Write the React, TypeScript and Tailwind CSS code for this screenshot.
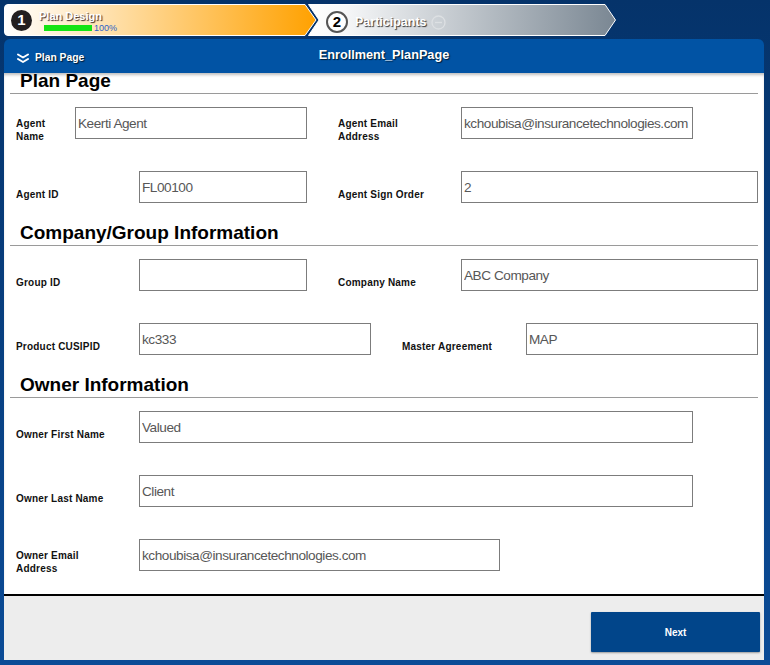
type FieldProps = {
  label: string[]
  value?: string
  labelW: string
  inputW: string
  className?: string
}

function Field({ label, value = '', labelW, inputW, className = '' }: FieldProps) {
  const twoLine = label.length > 1
  return (
    <div className={`flex items-end ${className}`}>
      <div
        className={`${labelW} shrink-0 text-[10px] leading-[13px] font-bold tracking-[0.2px] text-[#111] ${
          twoLine ? '-mb-[4px]' : 'mb-[2px]'
        }`}
      >
        {label.map((l) => (
          <div key={l}>{l}</div>
        ))}
      </div>
      <input
        readOnly
        defaultValue={value}
        className={`${inputW} h-[32px] shrink-0 border border-[#7c7c7c] bg-white px-[2px] text-[13.6px] tracking-[-0.45px] text-[#575757] outline-none`}
      />
    </div>
  )
}

function SectionTitle({ title, className = '' }: { title: string; className?: string }) {
  return (
    <div className={className}>
      <h2 className="h-[22px] pl-[16px] text-[19px] leading-[22px] font-bold text-black">{title}</h2>
      <div className="mx-[6px] mt-[1px] h-px bg-[#9a9a9a]" />
    </div>
  )
}

export default function App() {
  return (
    <div
      className="h-[665px] w-[770px] overflow-hidden bg-linear-to-b from-[#05336a] to-[#0b4b96] text-white"
      style={{ fontFamily: '"Liberation Sans", Arial, sans-serif' }}
    >
      {/* wizard steps */}
      <div className="flex h-[39px] pt-[4px] pl-[4px]">
        <div className="relative h-[32px] w-[314px]">
          <svg className="absolute inset-0" width="314" height="32" viewBox="0 0 314 32">
            <defs>
              <linearGradient id="s1" x1="0" x2="1" y1="0" y2="0">
                <stop offset="0" stopColor="#ffffff" />
                <stop offset="0.15" stopColor="#fff2dc" />
                <stop offset="1" stopColor="#ffa100" />
              </linearGradient>
            </defs>
            <path
              d="M4 0.5 H301 L312 16 L301 31.5 H4 Q0.5 31.5 0.5 28 V4 Q0.5 0.5 4 0.5 Z"
              fill="url(#s1)"
              stroke="#ffffff"
              strokeWidth="1"
            />
          </svg>
          <div className="relative flex h-full items-center pl-[7px]">
            <div className="flex h-[21px] w-[21px] items-center justify-center rounded-full bg-[#231f20] text-[15px] font-bold text-white">
              1
            </div>
            <div className="ml-[7px] mt-[1px]">
              <div className="text-[11px] leading-[13px] font-bold text-white [text-shadow:1px_1px_1px_rgba(40,20,20,0.9)]">
                Plan Design
              </div>
              <div className="mt-[1px] flex items-center pl-[5px]">
                <div className="h-[6px] w-[48px] bg-[#14e414]" />
                <span className="ml-[2px] text-[9px] leading-[8px] text-[#2c5fc6]">100%</span>
              </div>
            </div>
          </div>
        </div>

        <div className="relative -ml-[10px] h-[32px] w-[308px]">
          <svg className="absolute inset-0" width="308" height="32" viewBox="0 0 308 32">
            <defs>
              <linearGradient id="s2" x1="0" x2="1" y1="0" y2="0">
                <stop offset="0" stopColor="#ffffff" />
                <stop offset="0.12" stopColor="#f6f7f8" />
                <stop offset="1" stopColor="#7a8793" />
              </linearGradient>
            </defs>
            <path
              d="M0.5 0.5 H297 L307.5 16 L297 31.5 H0.5 L11 16 Z"
              fill="url(#s2)"
              stroke="#ffffff"
              strokeWidth="1"
            />
          </svg>
          <div className="relative flex h-full items-center pl-[18px] pt-[4px]">
            <div className="flex h-[22px] w-[22px] items-center justify-center rounded-full border-2 border-[#555] bg-white text-[15px] font-bold text-black">
              2
            </div>
            <span className="ml-[7px] text-[12.5px] font-bold text-white [text-shadow:1px_1px_1px_#333]">
              Participants
            </span>
            <svg className="ml-[4px]" width="15" height="15" viewBox="0 0 15 15">
              <circle cx="7.5" cy="7.5" r="6.5" fill="none" stroke="#dde0e3" strokeWidth="1.3" />
              <line x1="4" y1="7.5" x2="11" y2="7.5" stroke="#dde0e3" strokeWidth="1.3" />
            </svg>
          </div>
        </div>
      </div>

      {/* main panel */}
      <div className="ml-[4px] w-[760px]">
        <div className="relative flex h-[34px] items-center rounded-t-[6px] bg-[#0153a4]">
          <div className="flex items-center pl-[13px] pt-[4px]">
            <svg width="12" height="11" viewBox="0 0 12 11">
              <path
                d="M1 1.5 L6 4.5 L11 1.5 M1 6 L6 9 L11 6"
                fill="none"
                stroke="#ffffff"
                strokeWidth="2"
                strokeLinecap="round"
                strokeLinejoin="round"
              />
            </svg>
            <span className="ml-[6px] text-[10.3px] font-bold [text-shadow:1px_1px_1px_rgba(0,0,0,0.7)]">
              Plan Page
            </span>
          </div>
          <div className="absolute inset-x-0 top-[7px] text-center text-[12.7px] font-bold [text-shadow:1px_1px_1px_rgba(0,0,0,0.7)]">
            Enrollment_PlanPage
          </div>
        </div>

        <div className="h-[521px] overflow-hidden bg-white shadow-[inset_0_3px_3px_-1px_rgba(0,0,0,0.25)]">
          <SectionTitle title="Plan Page" className="-mt-[3px]" />

          <div className="pl-[12px]">
            <div className="mt-[13px] flex">
              <Field label={['Agent', 'Name']} value="Keerti Agent" labelW="w-[59px]" inputW="w-[232px]" />
              <Field
                label={['Agent Email', 'Address']}
                value="kchoubisa@insurancetechnologies.com"
                labelW="w-[123px]"
                inputW="w-[232px]"
                className="ml-[31px]"
              />
            </div>
            <div className="mt-[32px] flex">
              <Field label={['Agent ID']} value="FL00100" labelW="w-[123px]" inputW="w-[168px]" />
              <Field
                label={['Agent Sign Order']}
                value="2"
                labelW="w-[123px]"
                inputW="w-[297px]"
                className="ml-[31px]"
              />
            </div>
          </div>

          <SectionTitle title="Company/Group Information" className="mt-[19px]" />

          <div className="pl-[12px]">
            <div className="mt-[13px] flex">
              <Field label={['Group ID']} labelW="w-[123px]" inputW="w-[168px]" />
              <Field
                label={['Company Name']}
                value="ABC Company"
                labelW="w-[123px]"
                inputW="w-[297px]"
                className="ml-[31px]"
              />
            </div>
            <div className="mt-[32px] flex">
              <Field label={['Product CUSIPID']} value="kc333" labelW="w-[123px]" inputW="w-[232px]" />
              <Field
                label={['Master Agreement']}
                value="MAP"
                labelW="w-[124px]"
                inputW="w-[232px]"
                className="ml-[31px]"
              />
            </div>
          </div>

          <SectionTitle title="Owner Information" className="mt-[19px]" />

          <div className="pl-[12px]">
            <Field
              label={['Owner First Name']}
              value="Valued"
              labelW="w-[123px]"
              inputW="w-[554px]"
              className="mt-[13px]"
            />
            <Field
              label={['Owner Last Name']}
              value="Client"
              labelW="w-[123px]"
              inputW="w-[554px]"
              className="mt-[32px]"
            />
            <Field
              label={['Owner Email', 'Address']}
              value="kchoubisa@insurancetechnologies.com"
              labelW="w-[123px]"
              inputW="w-[361px]"
              className="mt-[32px]"
            />
          </div>
        </div>

        <div className="flex h-[66px] justify-end border-t-2 border-black bg-[#ededed] pt-[16px] pr-[4px]">
          <button className="h-[40px] w-[169px] rounded-[1px] bg-[#01458a] text-[10px] font-bold text-white shadow-[0_1px_2px_rgba(0,0,0,0.35)]">
            Next
          </button>
        </div>
      </div>
    </div>
  )
}
